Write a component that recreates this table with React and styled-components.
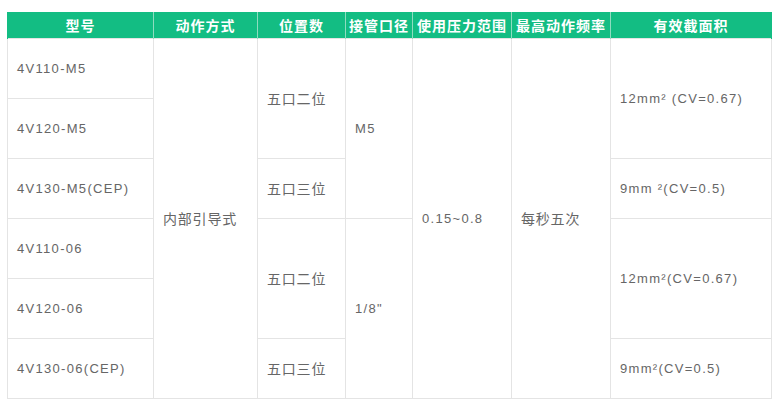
import React from "react";
import styled, { createGlobalStyle } from "styled-components";

const Global = createGlobalStyle`
  html, body { margin: 0; padding: 0; background: #fff; }
  body { font-family: "Liberation Sans", Arial, "Noto Sans CJK SC", sans-serif; }
`;

const Wrap = styled.div`
  padding: 12px 0 0 7px;
`;

const Table = styled.table`
  border-collapse: collapse;
  table-layout: fixed;
  width: 764px;
  font-family: "Liberation Sans", Arial, "Noto Sans CJK SC", sans-serif;
`;

const Th = styled.th`
  background: #13bd83;
  color: #fff;
  font-weight: bold;
  font-size: 14px;
  height: 26px;
  padding: 0;
  box-sizing: border-box;
  text-align: center;
  vertical-align: middle;
  border-left: 1px solid #8fdcbf;
  border-right: 1px solid #8fdcbf;
  font-family: "Noto Sans CJK SC", "Liberation Sans", sans-serif;
  letter-spacing: 1px;
  &:first-child { border-left: 1px solid #13bd83; }
  &:last-child { border-right: 1px solid #13bd83; }
`;

const Td = styled.td`
  border: 1px solid #e4e4e4;
  color: #666;
  font-size: ${(p) => (p.$cjk ? 14 : 13)}px;
  letter-spacing: ${(p) => (p.$cjk ? 0.8 : 1.3)}px;
  padding: 0 0 0 9px;
  height: 59px;
  vertical-align: middle;
  text-align: left;
  font-family: ${(p) =>
    p.$cjk
      ? `"Noto Sans CJK SC", "Liberation Sans", sans-serif`
      : `"Liberation Sans", Arial, "Noto Sans CJK SC", sans-serif`};
  font-weight: normal;
`;

const cols = [146, 104, 88, 67, 99, 99, 161];
const heads = ["型号", "动作方式", "位置数", "接管口径", "使用压力范围", "最高动作频率", "有效截面积"];

export default function App() {
  return (
    <>
      <Global />
      <Wrap>
        <Table>
          <colgroup>
            {cols.map((w, i) => (
              <col key={i} style={{ width: w }} />
            ))}
          </colgroup>
          <thead>
            <tr>
              {heads.map((h) => (
                <Th key={h}>{h}</Th>
              ))}
            </tr>
          </thead>
          <tbody>
            <tr>
              <Td>4V110-M5</Td>
              <Td rowSpan={6} $cjk>内部引导式</Td>
              <Td rowSpan={2} $cjk>五口二位</Td>
              <Td rowSpan={3}>M5</Td>
              <Td rowSpan={6}>0.15~0.8</Td>
              <Td rowSpan={6} $cjk>每秒五次</Td>
              <Td rowSpan={2}>12mm² (CV=0.67)</Td>
            </tr>
            <tr>
              <Td>4V120-M5</Td>
            </tr>
            <tr>
              <Td>4V130-M5(CEP)</Td>
              <Td $cjk>五口三位</Td>
              <Td>9mm ²(CV=0.5)</Td>
            </tr>
            <tr>
              <Td>4V110-06</Td>
              <Td rowSpan={2} $cjk>五口二位</Td>
              <Td rowSpan={3}>1/8"</Td>
              <Td rowSpan={2}>12mm²(CV=0.67)</Td>
            </tr>
            <tr>
              <Td>4V120-06</Td>
            </tr>
            <tr>
              <Td>4V130-06(CEP)</Td>
              <Td $cjk>五口三位</Td>
              <Td>9mm²(CV=0.5)</Td>
            </tr>
          </tbody>
        </Table>
      </Wrap>
    </>
  );
}
